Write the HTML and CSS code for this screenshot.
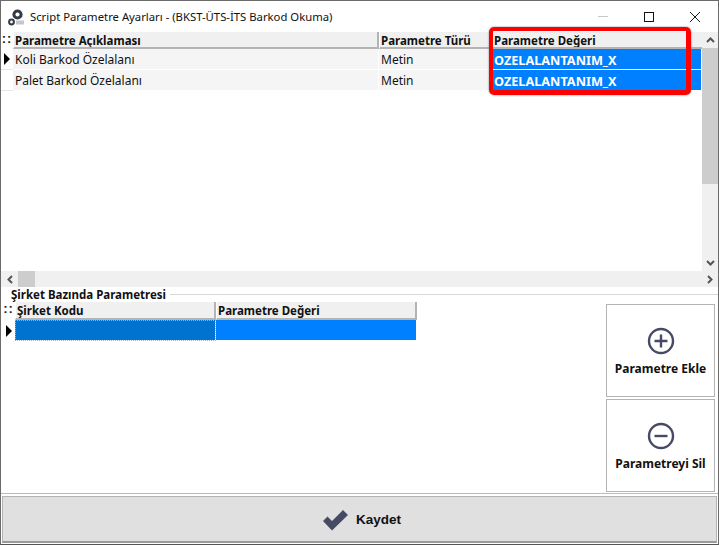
FILE: index.html
```html
<!DOCTYPE html>
<html lang="tr">
<head>
<meta charset="utf-8">
<title>Script Parametre Ayarları</title>
<link rel="stylesheet" href="styles.css">
</head>
<body>
<div class="window">
  <header class="titlebar">
    <svg class="app-icon" width="20" height="18" viewBox="0 0 20 18">
      <circle cx="9.5" cy="6.5" r="3.6" fill="none" stroke="#333b47" stroke-width="3"/>
      <circle cx="3.5" cy="14" r="2.4" fill="none" stroke="#333b47" stroke-width="2"/>
      <rect x="8" y="12.5" width="8" height="4" fill="#c4c8cc"/>
    </svg>
    <span class="title">Script Parametre Ayarları - (BKST-ÜTS-İTS Barkod Okuma)</span>
    <div class="controls">
      <span class="ctl-min"></span>
      <span class="ctl-max"></span>
      <svg class="ctl-close" width="12" height="12" viewBox="0 0 12 12"><path d="M1 1l10 10M11 1L1 11" stroke="#1a1a1a" stroke-width="1" fill="none"/></svg>
    </div>
  </header>

  <section class="upper">
    <div class="upper-main">
      <div class="grid-area">
        <div class="grid grid-top">
          <div class="corner">::</div><div class="hd">Parametre Açıklaması</div><div class="hd">Parametre Türü</div><div class="hd hd-last">Parametre Değeri</div>
          <div class="indicator"><span class="arrow"></span></div><div class="cell">Koli Barkod Özelalanı</div><div class="cell">Metin</div><div class="cell sel">OZELALANTANIM_X</div>
          <div class="indicator"></div><div class="cell">Palet Barkod Özelalanı</div><div class="cell">Metin</div><div class="cell sel">OZELALANTANIM_X</div>
        </div>
        <div class="vscroll">
          <span class="vbtn">
            <svg width="9" height="6" viewBox="0 0 9 6"><path d="M1 5l3.5-3.5L8 5" stroke="#555" stroke-width="2" fill="none"/></svg>
          </span>
          <span class="vthumb"></span>
          <span class="vtrack"></span>
          <span class="vbtn">
            <svg width="9" height="6" viewBox="0 0 9 6"><path d="M1 1l3.5 3.5L8 1" stroke="#555" stroke-width="2" fill="none"/></svg>
          </span>
        </div>
      </div>
      <div class="hscroll">
        <span class="hbtn"><svg width="6" height="9" viewBox="0 0 6 9"><path d="M5 1L1.5 4.500 5 8" stroke="#555" stroke-width="2" fill="none"/></svg></span>
        <span class="hthumb"></span>
        <span class="htrack"></span>
        <span class="hbtn"><svg width="6" height="9" viewBox="0 0 6 9"><path d="M1 1l3.5 3.5L1 8" stroke="#555" stroke-width="2" fill="none"/></svg></span>
      </div>
    </div>
  </section>

  <section class="lower">
    <div class="group-title"><span>Şirket Bazında Parametresi</span></div>
    <div class="lower-body">
      <div class="grid grid-bottom">
        <div class="corner">::</div><div class="hd">Şirket Kodu</div><div class="hd">Parametre Değeri</div>
        <div class="indicator ind-b"><span class="arrow"></span></div><div class="cell focus"></div><div class="cell sel"></div>
      </div>
      <div class="actions">
        <button class="action">
          <svg width="28" height="28" viewBox="0 0 28 28"><circle cx="14" cy="14" r="12" fill="none" stroke="#474a64" stroke-width="2.4"/><path d="M14 7.5v13M7.500 14h13" stroke="#474a64" stroke-width="2.4"/></svg>
          <span>Parametre Ekle</span>
        </button>
        <button class="action">
          <svg width="28" height="28" viewBox="0 0 28 28"><circle cx="14" cy="14" r="12" fill="none" stroke="#474a64" stroke-width="2.4"/><path d="M7.500 14h13" stroke="#474a64" stroke-width="2.4"/></svg>
          <span>Parametreyi Sil</span>
        </button>
      </div>
    </div>
  </section>

  <button class="save">
    <svg width="27" height="22" viewBox="0 0 27 22"><path d="M1 12l4.500-4.500 4.500 4.500L21 1l5 5L10 21.500z" fill="#474a64"/></svg>
    <span>Kaydet</span>
  </button>

  <div class="highlight"></div>
</div>
</body>
</html>
```
FILE: styles.css
```css
* { box-sizing: border-box; }
html, body { margin: 0; padding: 0; background: #fff; }
body { width: 719px; height: 545px; overflow: hidden; font-family: "Noto Sans", "DejaVu Sans", sans-serif; color: #000; }

.window {
  position: relative;
  width: 719px;
  height: 545px;
  display: flex;
  flex-direction: column;
  background: #fff;
  border: 1px solid #6b6b6b;
  border-bottom-color: #555;
}

.titlebar { height: 31px; flex: none; display: flex; align-items: center; padding-left: 7px; }
.app-icon { flex: none; margin-right: 2px; }
.title { font-size: 11.3px; color: #111; white-space: nowrap; margin-top: -1px; }
.controls { margin-left: auto; display: flex; align-items: center; }
.ctl-min { width: 10px; height: 1px; background: #c8c8c8; margin-right: 36px; }
.ctl-max { width: 10px; height: 10px; border: 1px solid #111; margin-right: 35px; }
.ctl-close { margin-right: 17px; }

.upper { flex: none; height: 255px; }
.upper-main { height: 100%; display: flex; flex-direction: column; }
.grid-area { flex: 1; display: flex; min-height: 0; }

.grid { display: grid; align-content: start; font-size: 12px; }
.grid-top { flex: 1; grid-template-columns: 12px 366px 113px 210px; grid-template-rows: 17px 21px 21px; }
.grid-bottom { width: 415px; grid-template-columns: 13px 201px 201px; grid-template-rows: 18px 21px; }

.corner { font-family: "Liberation Sans", sans-serif; font-size: 13px; font-weight: 700; letter-spacing: 1px; line-height: 13px; text-align: center; color: #222; background: #fff; }
.hd {
  background: #f0f0f0;
  border-right: 2px solid #b4b4b4;
  border-bottom: 2px solid #b4b4b4;
  border-left: 1px solid #fff;
  padding-left: 1px;
  font-weight: 700;
  font-size: 11.5px;
  line-height: 17px;
  color: #111;
  white-space: nowrap;
  overflow: hidden;
}
.hd-last { border-right: 0; }
.indicator { background: #fff; border-bottom: 1px solid #e8e8e8; display: flex; align-items: center; justify-content: center; }
.ind-b { border-bottom: 0; }
.arrow { width: 0; height: 0; border-left: 6px solid #000; border-top: 6px solid transparent; border-bottom: 6px solid transparent; }
.cell {
  background: #f5f5f5;
  border-bottom: 1px solid #fff;
  border-right: 1px solid #fff;
  padding-left: 2px;
  padding-top: 1px;
  font-size: 12px;
  line-height: 20px;
  color: #111;
  white-space: nowrap;
}
.sel { background: #0080ff; color: #fff; font-weight: 700; font-size: 12.7px; }
.focus { background: #0073d1; outline: 1px dotted #e8a050; outline-offset: -1px; }

.vscroll { width: 16px; flex: none; display: flex; flex-direction: column; background: #f0f0f0; }
.vbtn { height: 16px; display: flex; align-items: center; justify-content: center; flex: none; }
.vthumb { height: 136px; background: #cdcdcd; flex: none; }
.vtrack { flex: 1; }
.hscroll { height: 16px; flex: none; display: flex; background: #f0f0f0; }
.hbtn { width: 17px; display: flex; align-items: center; justify-content: center; flex: none; }
.hthumb { width: 17px; background: #cdcdcd; flex: none; }
.htrack { flex: 1; }

.lower { flex: 1; display: flex; flex-direction: column; min-height: 0; }
.group-title { height: 15px; flex: none; display: flex; align-items: center; font-size: 11.5px; font-weight: 700; color: #111; padding-left: 10px; gap: 4px; white-space: nowrap; }
.group-title::after { content: ""; flex: 1; height: 1px; background: #d8d8d8; }
.group-title span { line-height: 14px; }
.lower-body { flex: 1; display: flex; justify-content: space-between; padding-left: 1px; padding-right: 3px; border-bottom: 1px solid #bbb; min-height: 0; }
.actions { width: 109px; display: flex; flex-direction: column; gap: 2px; margin-top: 2px; }
.action {
  height: 93px;
  background: #fff;
  border: 1px solid #b4b4b4;
  padding: 22px 0 0;
  display: flex;
  flex-direction: column;
  align-items: center;
  gap: 5px;
  font-family: inherit;
  font-size: 12px;
  font-weight: 700;
  color: #111;
  white-space: nowrap;
}

.save {
  flex: none;
  height: 47px;
  margin: 2px 1px 1px;
  padding: 1px 0 0 4px;
  background: #e0e0e0;
  border: 1px solid #b4b4b4;
  border-bottom: 2px solid #9a9a9a;
  display: flex;
  align-items: center;
  justify-content: center;
  gap: 7px;
  font-family: "Liberation Sans", sans-serif;
  font-size: 13.5px;
  font-weight: 700;
  color: #111;
}

.highlight {
  position: absolute;
  left: 488px;
  top: 26px;
  width: 202px;
  height: 68px;
  border: 4px solid #f00;
  border-right-width: 5px;
  border-bottom-width: 5px;
  border-radius: 5px;
  box-shadow: 0 0 2px #777;
}
```
